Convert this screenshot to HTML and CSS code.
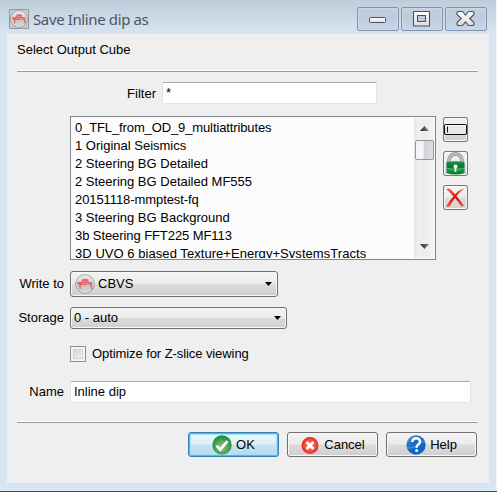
FILE: index.html
```html
<!DOCTYPE html>
<html lang="en">
<head>
<meta charset="utf-8">
<title>Save Inline dip as</title>
<link rel="stylesheet" href="styles.css">
</head>
<body>
<svg class="defs" width="0" height="0" aria-hidden="true">
  <defs>
    <linearGradient id="silver" x1="0" y1="0" x2="0" y2="1"><stop offset="0" stop-color="#ececec"/><stop offset=".6" stop-color="#c3c6ca"/><stop offset="1" stop-color="#d9dbde"/></linearGradient>
    <linearGradient id="glyph" x1="0" y1="0" x2="0" y2="1"><stop offset="0" stop-color="#fff"/><stop offset="1" stop-color="#dcdcdc"/></linearGradient>
    <radialGradient id="green" cx=".5" cy=".6" r=".55"><stop offset="0" stop-color="#9cc49a"/><stop offset=".6" stop-color="#4fa35a"/><stop offset="1" stop-color="#159238"/></radialGradient>
    <radialGradient id="red" cx=".5" cy=".5" r=".5"><stop offset="0" stop-color="#f79a88"/><stop offset=".7" stop-color="#ee4a3c"/><stop offset="1" stop-color="#e8281e"/></radialGradient>
    <linearGradient id="blue" x1="0" y1="0" x2="1" y2="1"><stop offset="0" stop-color="#4a9ad6"/><stop offset=".45" stop-color="#1668bc"/><stop offset="1" stop-color="#0a62d0"/></linearGradient>
    <linearGradient id="lock" x1="0" y1="0" x2="0" y2="1"><stop offset="0" stop-color="#159447"/><stop offset=".5" stop-color="#0c6f2c"/><stop offset=".55" stop-color="#21a349"/><stop offset="1" stop-color="#087427"/></linearGradient>
    <linearGradient id="cross" x1="0" y1="0" x2="0" y2="1"><stop offset="0" stop-color="#f06a54"/><stop offset=".5" stop-color="#d80b08"/><stop offset="1" stop-color="#ee604e"/></linearGradient>
    <linearGradient id="arrow-fill"><stop offset="0" stop-color="#222"/><stop offset="1" stop-color="#888"/></linearGradient>
    <symbol id="logo" viewBox="0 0 20 20">
      <circle cx="10" cy="10" r="9.3" fill="url(#silver)" stroke="#8f9295" stroke-width=".9"/>
      <circle cx="10" cy="10" r="8.3" fill="none" stroke="#e7e7e7" stroke-width=".7"/>
      <path d="M1.800 8.200 6.500 7.800l.7-2.300 1.500-.8 1.200.7 1.500-.9 1.800 1.200.4 2L18.300 9l-1.600 1.100.9 4.900h-1.400l-1.100-4.300-2.600-.5-1.900 1-3.200-.2-1.600.8-.3 3.400-1.200-.2.200-3.900-1.900-1.200Z" fill="#e46468"/>
      <path d="M7.500 7.300h5.200M7 9.200l7 .6" stroke="#d9b4b6" stroke-width=".6" fill="none"/>
    </symbol>
  </defs>
</svg>
<div class="window">
  <header class="titlebar">
    <span class="app-icon"><svg width="18" height="18"><use href="#logo"/></svg></span>
    <h1 class="title">Save Inline dip as</h1>
    <div class="controls">
      <span class="control"><svg width="40" height="22"><rect x="11.500" y="9.500" width="16" height="5" rx="1" fill="url(#glyph)" stroke="#4d5262"/></svg></span>
      <span class="control"><svg width="40" height="22"><path fill-rule="evenodd" d="M12 3.500h15q.5 0 .5.500v14h-16V4q0-.5.500-.5ZM15.500 7.500v6h8v-6Z" fill="url(#glyph)" stroke="#4d5262" stroke-width="1.100"/></svg></span>
      <span class="control"><svg width="40" height="22"><path d="M12 3.500h4.500l3 3.600 3-3.600H27l1 1v2l-4.300 4 4.300 4v2l-1 1h-4.500l-3-3.600-3 3.600H12l-1-1v-2l4.300-4-4.300-4v-2Z" fill="url(#glyph)" stroke="#4d5262" stroke-width="1.100"/></svg></span>
    </div>
  </header>
  <main class="dialog">
    <p class="heading">Select Output Cube</p>
    <div class="separator"></div>
    <div class="filter-row">
      <label class="label">Filter</label>
      <div class="field">*</div>
    </div>
    <div class="list-row">
      <div class="list">
        <ul class="items">
          <li class="tighter">0_TFL_from_OD_9_multiattributes</li>
          <li>1 Original Seismics</li>
          <li>2 Steering BG Detailed</li>
          <li>2 Steering BG Detailed MF555</li>
          <li class="tight">20151118-mmptest-fq</li>
          <li>3 Steering BG Background</li>
          <li class="tight">3b Steering FFT225 MF113</li>
          <li class="loose">3D UVQ 6 biased Texture+Energy+SystemsTracts</li>
        </ul>
        <div class="scrollbar">
          <svg class="arrow" width="9" height="5"><path d="M0 5 4.500 0 9 5Z" fill="url(#arrow-fill)"/></svg>
          <div class="thumb"></div>
          <svg class="arrow down" width="9" height="5"><path d="M0 0h9L4.500 5Z" fill="url(#arrow-fill)"/></svg>
        </div>
      </div>
      <div class="tools">
        <span class="tool"><svg width="25" height="25"><rect x="1.500" y="7.500" width="22" height="10" rx="1.500" fill="#e9e9e9" stroke="#111" stroke-width="1.200"/><path d="M2.500 11V8.500h20V12" stroke="#fafafa" fill="none"/><path d="M4.500 9.500v6" stroke="#111"/></svg></span>
        <span class="tool"><svg width="25" height="25"><path d="M6 12V9.500a6.500 6.500 0 0 1 13 0V12" fill="none" stroke="#979c9f" stroke-width="3.800"/><path d="M6 11V9.500a6.500 6.500 0 0 1 13 0V11" fill="none" stroke="#b9bec0" stroke-width="2"/><path d="M3.500 11q9-1.500 18 0v11q-9 3-18 0Z" fill="url(#lock)"/><path d="M4 17q8.500 3.500 17 0" fill="none" stroke="#55bd6c" stroke-width=".8"/><circle cx="12.500" cy="15.500" r="2" fill="#f0fff0"/><path d="M12.500 16v5" stroke="#f0fff0" stroke-width="1.700"/></svg></span>
        <span class="tool"><svg width="25" height="25"><path d="M3.300 4.300q2.300-1.500 4 0 2.300 2 4.700 5 4.500-5 9.500-5.800-4.600 3.300-8 7.600 4 5 7.700 9.700l-3 .7q-3.200-5-6.200-8.400-3.500 4.700-5.300 8.400-2 1-3.400-.5 3-5.300 7.200-9.600-3.500-4.300-7.200-7.100Z" fill="url(#cross)"/></svg></span>
      </div>
    </div>
    <div class="form">
      <label class="label">Write to</label>
      <div class="combo format"><svg width="20" height="20"><use href="#logo"/></svg><span>CBVS</span><svg class="caret" width="7" height="4"><path d="M0 0h7L3.500 4Z"/></svg></div>
      <label class="label">Storage</label>
      <div class="combo storage"><span>0 - auto</span><svg class="caret" width="7" height="4"><path d="M0 0h7L3.500 4Z"/></svg></div>
      <div class="check"><span class="box"></span><span class="tight">Optimize for Z-slice viewing</span></div>
      <label class="label">Name</label>
      <div class="field">Inline dip</div>
    </div>
    <div class="separator bottom"></div>
    <footer class="buttons">
      <span class="button default"><svg width="20" height="20"><circle cx="10" cy="10" r="9.700" fill="url(#green)"/><path d="m4.500 10.700 3.700 4L15.500 6" fill="none" stroke="#fff" stroke-width="2.700"/></svg>OK</span>
      <span class="button"><svg width="20" height="20"><circle cx="10" cy="10.500" r="8.500" fill="url(#red)"/><path d="m6.500 7 7 7m0-7-7 7" stroke="#fff" stroke-width="2.500"/></svg>Cancel</span>
      <span class="button"><svg width="20" height="20"><circle cx="10" cy="10" r="9.700" fill="url(#blue)"/><path d="M1 13q7 .5 10-3.500T19 7" fill="none" stroke="#66b2e4" stroke-opacity=".45" stroke-width="2"/><path d="M6.300 7q.2-3.700 3.900-3.700t3.900 3.400q0 1.800-2 3.100-1.500 1-1.500 2.900" fill="none" stroke="#fff" stroke-width="2.400"/><circle cx="10.600" cy="15.600" r="1.500" fill="#fff"/></svg>Help</span>
    </footer>
  </main>
</div>
</body>
</html>
```
FILE: styles.css
```css
* { box-sizing: border-box; }
body {
  margin: 0;
  font: 13px/18px "Liberation Sans", Arial, sans-serif;
  color: #000;
  background: #f4f7fa;
}
svg { display: block; flex: none; }
.defs { position: absolute; }
.window {
  width: 497px;
  height: 492px;
  padding: 0 8px 0 7px;
  background: linear-gradient(#bfcddb, #d7e4f1 34px);
  border-bottom: 1px solid #45484c;
  box-shadow: inset -1px 0 #edf3f9, inset 0 -1px #e3edf6;
}
.titlebar {
  display: flex;
  height: 34px;
  padding: 7px 2px 0;
}
.app-icon {
  width: 20px;
  height: 20px;
  margin-top: 2px;
  border: 1px solid #96999c;
  border-radius: 1px;
  background: #c9cccf;
}
.title {
  margin: 2px 0 0 4px;
  font: 15px/20px "Noto Sans", sans-serif;
  letter-spacing: -.38px;
  color: #4c5764;
  white-space: nowrap;
}
.controls { display: flex; gap: 2px; margin-left: auto; }
.control {
  width: 42px;
  height: 24px;
  border: 1px solid #8294b0;
  border-radius: 2px;
  background: linear-gradient(#c3d0df, #bdcbdc 45%, #c8d7e7);
  box-shadow: inset 0 0 0 1px #cbd8e6;
}
.dialog {
  height: 449px;
  padding: 6px 11px 0 10px;
  background: #efefef;
}
.heading { margin: 0; line-height: 19px; height: 30px; }
.separator {
  height: 2px;
  border-top: 1px solid #fff;
  border-bottom: 1px solid #999c9a;
}
.label { text-align: right; white-space: nowrap; }
.filter-row {
  display: grid;
  grid-template-columns: 139px 215px;
  column-gap: 6px;
  align-items: center;
  margin-top: 10px;
}
.filter-row .label { padding-top: 2px; }
.field {
  height: 22px;
  padding: 1px 3px;
  border: 1px solid #dfe3ea;
  border-top-color: #a9abb2;
  border-radius: 2px;
  background: #fff;
}
.list-row { display: flex; gap: 7px; margin: 12px 0 0 53px; }
.list {
  display: flex;
  width: 366px;
  height: 144px;
  padding: 1px;
  border: 1px solid #82858f;
  background: #fcfcfc;
}
.items {
  flex: 1;
  margin: 0;
  padding: 1px 0 0 3px;
  overflow: hidden;
  list-style: none;
  white-space: nowrap;
}
.tight { letter-spacing: -.08px; }
.tighter { letter-spacing: -.12px; }
.loose { letter-spacing: .05px; }
.scrollbar {
  display: flex;
  flex-direction: column;
  align-items: center;
  width: 20px;
  padding-top: 8px;
  background: linear-gradient(90deg, #e5e5e5, #f0f0f0 20%, #ececec 60%, #f5f5f5);
}
.thumb {
  width: 19px;
  height: 20px;
  margin-top: 9px;
  border: 1px solid #959595;
  border-radius: 2px;
  background: linear-gradient(90deg, #f5f5f5 40%, #d2d4d9 50%, #dedfe3);
}
.arrow.down { margin: auto 0 9px; }
.tools { display: flex; flex-direction: column; gap: 9px; padding-top: 1px; }
.tool {
  width: 25px;
  height: 25px;
  border-radius: 3px;
  background: linear-gradient(#f4f4f4, #ebebeb 48%, #dcdcdc 52%, #d0d0d0);
  box-shadow: inset 0 0 0 1px #777, inset 0 0 0 2px #f8f8f8;
}
.form {
  display: grid;
  grid-template-columns: 47px 401px;
  grid-template-rows: 26px 42px 30px 46px;
  column-gap: 6px;
  align-items: center;
  margin-top: 11px;
}
.combo {
  display: flex;
  align-items: center;
  padding: 0 5px 0 4px;
  border: 1px solid #707070;
  border-radius: 3px;
  background: linear-gradient(#f3f3f3, #ebebeb 48%, #dcdcdc 52%, #cfcfcf);
  box-shadow: inset 0 0 0 1px #f7f7f7;
}
.format { width: 208px; height: 26px; gap: 3px; }
.storage { width: 217px; height: 22px; padding-left: 3px; }
.caret { margin-left: auto; }
.check {
  grid-column: 2;
  display: flex;
  align-items: center;
  gap: 6px;
}
.box {
  width: 16px;
  height: 16px;
  border: 1px solid #8e8f8f;
  background: linear-gradient(135deg, #cbcfd5, #f6f6f6);
  box-shadow: inset 0 0 0 2px #f4f4f4, inset 0 0 0 3px #d0d2d6;
}
.bottom { margin-top: 6px; }
.buttons {
  display: flex;
  justify-content: flex-end;
  gap: 8px;
  margin-top: 9px;
  padding-right: 1px;
}
.button {
  display: flex;
  align-items: center;
  justify-content: center;
  gap: 4px;
  width: 91px;
  height: 25px;
  border: 1px solid #707070;
  border-radius: 3px;
  background: linear-gradient(#f3f3f3, #ebebeb 48%, #dcdcdc 52%, #cfcfcf);
  box-shadow: inset 0 0 0 1px #f8f8f8;
}
.button.default {
  border-color: #3c7fb1;
  background: linear-gradient(#edf6fb, #deeff8 48%, #c6e2f1 52%, #b7d9ec);
  box-shadow: inset 0 0 0 1px #35c5f0, inset 0 0 0 2px #a4e2f7;
}
```
